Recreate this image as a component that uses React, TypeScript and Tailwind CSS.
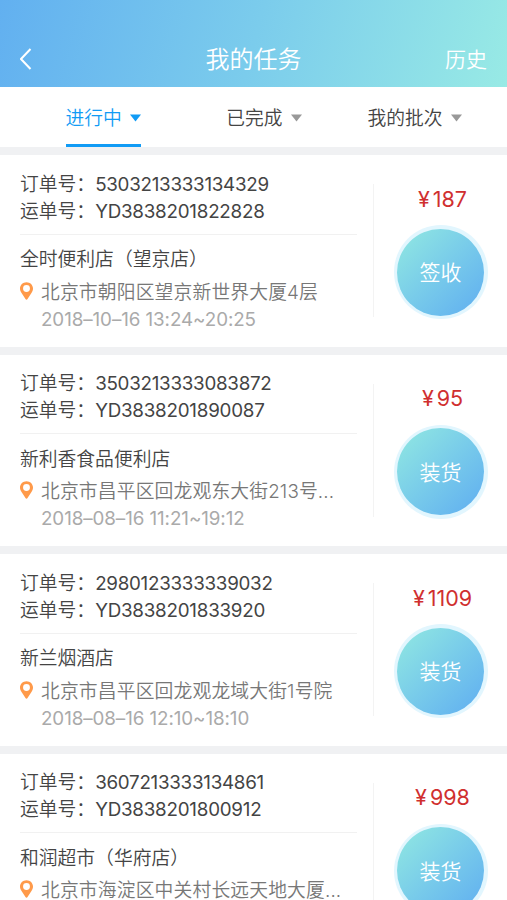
import clsx from 'clsx';

type Task = {
  orderNo: string;
  waybillNo: string;
  shop: string;
  address: string;
  time?: string;
  price: number;
  action: string;
};

const TABS = [
  { label: '进行中', active: true },
  { label: '已完成', active: false },
  { label: '我的批次', active: false },
];

const TASKS: Task[] = [
  {
    orderNo: '5303213333134329',
    waybillNo: 'YD3838201822828',
    shop: '全时便利店（望京店）',
    address: '北京市朝阳区望京新世界大厦4层',
    time: '2018–10–16 13:24~20:25',
    price: 187,
    action: '签收',
  },
  {
    orderNo: '3503213333083872',
    waybillNo: 'YD3838201890087',
    shop: '新利香食品便利店',
    address: '北京市昌平区回龙观东大街213号...',
    time: '2018–08–16 11:21~19:12',
    price: 95,
    action: '装货',
  },
  {
    orderNo: '2980123333339032',
    waybillNo: 'YD3838201833920',
    shop: '新兰烟酒店',
    address: '北京市昌平区回龙观龙域大街1号院',
    time: '2018–08–16 12:10~18:10',
    price: 1109,
    action: '装货',
  },
  {
    orderNo: '3607213333134861',
    waybillNo: 'YD3838201800912',
    shop: '和润超市（华府店）',
    address: '北京市海淀区中关村长远天地大厦...',
    price: 998,
    action: '装货',
  },
];

function PinIcon() {
  return (
    <svg className="mt-[3px] h-[18px] w-[13px] shrink-0" viewBox="0 0 14 19" fill="#ff9a4a">
      <path
        fillRule="evenodd"
        d="M7 0C3.1 0 0 3 0 6.9 0 8.6.6 10 1.5 11.5L5.9 18.2c.5.8 1.7.8 2.2 0l4.4-6.7C13.4 10 14 8.6 14 6.9 14 3 10.9 0 7 0Zm0 3.1a3.7 3.7 0 1 1 0 7.4 3.7 3.7 0 0 1 0-7.4Z"
      />
    </svg>
  );
}

function Header() {
  return (
    <header className="flex h-[87px] items-end justify-between bg-[linear-gradient(105deg,#62b0f0_0%,#7bccec_50%,#98eae5_100%)] px-5 pb-[11px] text-white">
      <div className="flex h-[34px] w-20 items-center">
        <svg className="h-[22px] w-3" viewBox="0 0 12 22" fill="none" stroke="currentColor" strokeWidth="2">
          <path d="M10.5 1 1 11l9.5 10" />
        </svg>
      </div>
      <h1 className="text-[24px] leading-8">我的任务</h1>
      <div className="w-20 text-right text-[21px] leading-8">历史</div>
    </header>
  );
}

function Tabs() {
  return (
    <nav className="flex h-[60px] bg-white pl-[65.5px]">
      {TABS.map(({ label, active }) => (
        <div
          key={label}
          className={clsx(
            'mr-[65.5px] flex items-center gap-[8.5px] border-b-[3px] pt-[7px] text-[18.75px] first:mr-[85px] last:mr-0',
            active ? 'border-[#119bf5] text-[#119bf5]' : 'border-transparent text-[#444]'
          )}
        >
          {label}
          <svg
            className={clsx('-mt-[3px] h-[8px] w-[11px]', active ? 'text-[#119bf5]' : 'text-[#999]')}
            viewBox="0 0 11 8"
            fill="currentColor"
          >
            <path d="M0 .5h11L5.5 7.5Z" />
          </svg>
        </div>
      ))}
    </nav>
  );
}

function TaskCard({ task }: { task: Task }) {
  return (
    <section className="flex h-[191.5px] shrink-0 bg-white pl-5">
      <div className="w-[337px] pt-[15.5px] text-[18.8px] leading-[27px] whitespace-nowrap text-[#444]">
        <div className="h-[64px] border-b border-[#f1f1f1]">
          <p>
            订单号：<span className="font-normal tracking-[-0.27px]">{task.orderNo}</span>
          </p>
          <p>
            运单号：<span className="font-normal tracking-[-0.23px]">{task.waybillNo}</span>
          </p>
        </div>
        <p className="mt-[11.5px]">{task.shop}</p>
        <div className="mt-[5.5px] flex gap-[8px]">
          <PinIcon />
          <div>
            <p className="tracking-[0.15px] text-[#777]">{task.address}</p>
            {task.time && <p className="font-normal tracking-[-0.08px] text-[#aaa]">{task.time}</p>}
          </div>
        </div>
      </div>
      <div className="mt-[29px] ml-4 flex h-[133px] w-[134px] flex-col items-center border-l border-[#f3f3f3]">
        <p className="flex h-[30px] items-center gap-[3px] pl-1 text-[21.5px] font-normal text-[#d02f2f]">
          <span>¥</span>
          <span>{task.price}</span>
        </p>
        <button className="mt-[11px] flex size-[94px] shrink-0 items-center justify-center rounded-full bg-[#e2f6fe] p-[3.5px]">
          <span className="flex size-full items-center justify-center rounded-full bg-[linear-gradient(135deg,#8fe6e2_5%,#78cbea_50%,#61b0f0_95%)] pt-[2px] text-[21px] text-white">
            {task.action}
          </span>
        </button>
      </div>
    </section>
  );
}

export default function App() {
  return (
    <div className="h-[900px] w-[507px] overflow-hidden bg-[#f0f1f3] font-['Inter','Noto_Sans_CJK_SC',sans-serif] font-[350]">
      <Header />
      <Tabs />
      <main className="mt-2 flex flex-col gap-2">
        {TASKS.map((task) => (
          <TaskCard key={task.orderNo} task={task} />
        ))}
      </main>
    </div>
  );
}
